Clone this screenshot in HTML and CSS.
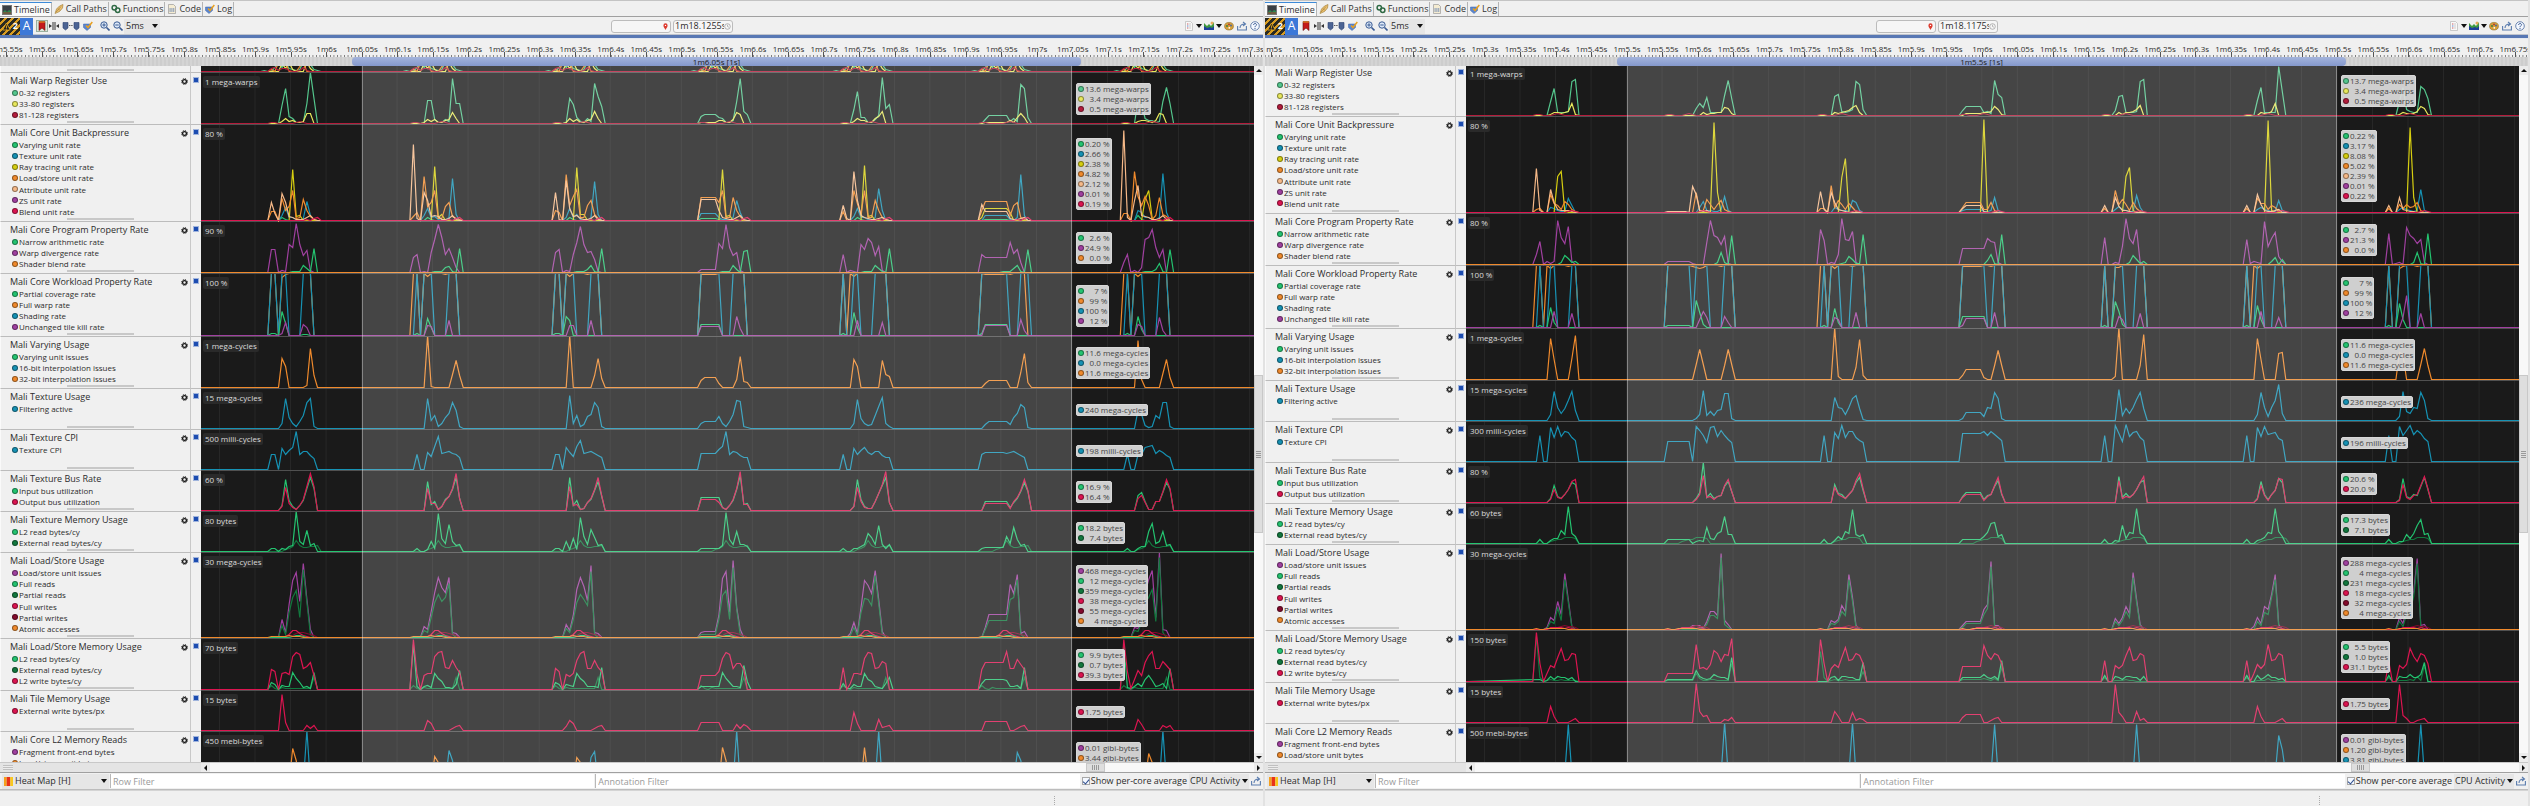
FILE: index.html
```html
<!DOCTYPE html>
<html lang="en">
<head>
  <meta charset="utf-8">
  <title>Timeline Compare</title>
  <link rel="stylesheet" href="styles.css">
</head>
<body>
  <svg class="symbols" aria-hidden="true">
    <symbol id="i-timeline" viewBox="0 0 10 10"><rect x=".5" y=".5" width="9" height="9" fill="#3a3f44" stroke="#777"/><path d="M1 7l2-2 2 2 2-2 2 1v3H1z" fill="#2d8a4e"/><path d="M1 8h8" stroke="#b03030"/></symbol>
    <symbol id="i-paths" viewBox="0 0 10 10"><path d="M1 9.500L2.500 5l3-3L9 .5 8.500 4l-3 3.500z" fill="#ecc070" stroke="#9c7830" stroke-width=".6"/><path d="M2 8l5-5.500M4 4.500l2 2" stroke="#9c7830" stroke-width=".6"/></symbol>
    <symbol id="i-functions" viewBox="0 0 10 10"><g fill="none" stroke="#2f6a45" stroke-width="1.500"><circle cx="3.300" cy="3.800" r="2.200"/><circle cx="6.700" cy="6.200" r="2.200"/></g></symbol>
    <symbol id="i-code" viewBox="0 0 10 10"><path d="M1.500.5h5l2 2v7h-7z" fill="#f5ecd2" stroke="#9a9a9a" stroke-width=".7"/><path d="M2.500 5h5M2.500 7h5" stroke="#3b62a8" stroke-dasharray="1.200 .6"/></symbol>
    <symbol id="i-check" viewBox="0 0 10 10"><path d="M.5 3h7v3.500L4 9.500.5 6.500z" fill="#5b86cf" stroke="#3b62a8" stroke-width=".5"/><path d="M3 4.500l2 2L9.300 1" fill="none" stroke="#e8a020" stroke-width="1.500"/></symbol>
    <symbol id="i-bookmark" viewBox="0 0 10 10"><path d="M2 .5h6v9L5 7 2 9.500z" fill="#c41a1a" stroke="#6b0e0e" stroke-width=".6"/><path d="M2 1h6" stroke="#e8a020"/></symbol>
    <symbol id="i-split" viewBox="0 0 10 10"><path d="M4 1v8M6 1v8" stroke="#333"/><path d="M0 3l3 2-3 2zM10 3L7 5l3 2z" fill="#333"/></symbol>
    <symbol id="i-range" viewBox="0 0 18 10"><path d="M1 1.500h5V7L3.500 9 1 7zM12 1.500h5V7l-2.500 2L12 7z" fill="#4c6494" stroke="#2c4270" stroke-width=".6"/><path d="M7 4.500h4" stroke="#555" stroke-dasharray="1.400 .8"/></symbol>
    <symbol id="i-zoomin" viewBox="0 0 10 10"><circle cx="4" cy="4" r="3.200" fill="#dce8f8" stroke="#3b5c94"/><path d="M6.500 6.500l3 3" stroke="#3b5c94" stroke-width="1.600"/><path d="M2.300 4h3.400M4 2.300v3.400" stroke="#3b5c94"/></symbol>
    <symbol id="i-zoomout" viewBox="0 0 10 10"><circle cx="4" cy="4" r="3.200" fill="#dce8f8" stroke="#3b5c94"/><path d="M6.500 6.500l3 3" stroke="#3b5c94" stroke-width="1.600"/><path d="M2.300 4h3.400" stroke="#3b5c94"/></symbol>
    <symbol id="i-doc" viewBox="0 0 10 10"><path d="M1.500.5h5l2 2v7h-7z" fill="#f8f8f8" stroke="#b8b8b8" stroke-width=".7"/><path d="M3 3h1.400M3 7h1.400" stroke="#d06060"/><path d="M3 5h1.400" stroke="#5b86cf"/><path d="M5 3h2M5 5h2M5 7h2" stroke="#bbb" stroke-width=".7"/></symbol>
    <symbol id="i-chart" viewBox="0 0 10 10"><path d="M0 2l3 3 2-2 2 2 3-4v8H0z" fill="#3f9a3f"/><path d="M0 5l3 2 3-1 2 1 2-2v4H0z" fill="#1d3f9a"/><circle cx="8" cy="2" r="1.500" fill="#e8a85a"/></symbol>
    <symbol id="i-palette" viewBox="0 0 10 10"><ellipse cx="5" cy="5.200" rx="4.400" ry="3.800" fill="#d8a038" stroke="#8f6a20" stroke-width=".6"/><circle cx="3" cy="5" r=".9" fill="#2f7a45"/><circle cx="5" cy="3.400" r=".9" fill="#b03030"/><circle cx="7" cy="4.500" r=".9" fill="#3b62a8"/><circle cx="5.300" cy="6.800" r=".9" fill="#fff"/></symbol>
    <symbol id="i-export" viewBox="0 0 10 10"><path d="M.6 5v4h8.800V5M3 7c0-3 2-4 5-4M6 1l2.500 2L6 5" fill="none" stroke="#5a7cae" stroke-width="1.100"/></symbol>
    <symbol id="i-help" viewBox="0 0 10 10"><circle cx="5" cy="5" r="4.300" fill="#f4f8ff" stroke="#4a6a9c" stroke-width=".8"/><path d="M3.600 4c0-2 2.900-2 2.900-.2C6.500 4.800 5 4.800 5 6.200M5 7v1" fill="none" stroke="#3b5c94"/></symbol>
    <symbol id="i-gear" viewBox="0 0 10 10"><circle cx="5" cy="5" r="4.200" fill="none" stroke="#111" stroke-width="1.400" stroke-dasharray="1.650 1.650"/><circle cx="5" cy="5" r="2.700" fill="none" stroke="#111" stroke-width="1.800"/></symbol>
    <symbol id="i-heat" viewBox="0 0 10 10"><path d="M0 0h3v10H0z" fill="#f5a01e"/><path d="M3 0h4v10H3z" fill="#e8321a"/><path d="M7 0h3v10H7z" fill="#f8c81e"/></symbol>
    <symbol id="i-pin" viewBox="0 0 10 10"><path d="M5 10C4 7 2 6 2 3.400a3 3 0 0 1 6 0C8 6 6 7 5 10z" fill="#dd3a2e"/><circle cx="5" cy="3.400" r="1" fill="#fff"/></symbol>
    <symbol id="i-clock" viewBox="0 0 10 10"><circle cx="5" cy="5" r="4" fill="none" stroke="#999"/><path d="M5 2.500V5l2 1" fill="none" stroke="#999"/></symbol>
    <symbol id="i-warn" viewBox="0 0 10 10"><path d="M5 1l4.300 8H.7z" fill="#222" stroke="#f0b020" stroke-width=".9"/><path d="M5 3.800v3M5 7.400v1" stroke="#f0b020"/></symbol>
  </svg>

  <main class="workspace">
    <section class="panel" data-panel="left">
      <nav class="tabs">
        <a class="tab active" href="#"><svg><use href="#i-timeline"/></svg>Timeline</a>
        <a class="tab" href="#"><svg><use href="#i-paths"/></svg>Call Paths</a>
        <a class="tab" href="#"><svg><use href="#i-functions"/></svg>Functions</a>
        <a class="tab" href="#"><svg><use href="#i-code"/></svg>Code</a>
        <a class="tab" href="#"><svg><use href="#i-check"/></svg>Log</a>
      </nav>
      <div class="toolbar">
        <div class="tools">
          <button class="warnings" aria-label="2 warnings"><svg><use href="#i-warn"/></svg>2</button>
          <button class="annotate" aria-label="Annotations">A</button>
          <button class="tool pressed" aria-label="Bookmarks"><svg><use href="#i-bookmark"/></svg></button>
          <button class="tool" aria-label="Split"><svg><use href="#i-split"/></svg></button>
          <button class="tool wide" aria-label="Range"><svg><use href="#i-range"/></svg></button>
          <button class="tool" aria-label="Filter"><svg><use href="#i-check"/></svg></button>
          <span class="spacer"></span>
          <button class="tool" aria-label="Zoom in"><svg><use href="#i-zoomin"/></svg></button>
          <button class="tool" aria-label="Zoom out"><svg><use href="#i-zoomout"/></svg></button>
          <span class="picker zoom"><select aria-label="Zoom level"><option>5ms</option></select></span>
        </div>
        <div class="markers">
          <label class="marker"><input type="text" aria-label="Marker"><svg><use href="#i-pin"/></svg></label>
          <label class="marker"><input type="text" aria-label="Duration" value="1m18.1255s"><svg><use href="#i-clock"/></svg></label>
        </div>
        <div class="tools end">
          <button class="tool menu" aria-label="Switch template"><svg><use href="#i-doc"/></svg></button>
          <button class="tool menu" aria-label="Charts"><svg><use href="#i-chart"/></svg></button>
          <button class="tool" aria-label="Colors"><svg><use href="#i-palette"/></svg></button>
          <button class="tool" aria-label="Export"><svg><use href="#i-export"/></svg></button>
          <button class="tool" aria-label="Help"><svg><use href="#i-help"/></svg></button>
        </div>
      </div>
      <div class="ruler"></div>
      <div class="strip"><div class="range">1m6.05s [1s]</div></div>
      <div class="view">
        <div class="rows"></div>
        <div class="vscroll"><span class="arrow up"></span><span class="thumb"></span><span class="arrow down"></span></div>
      </div>
      <div class="hscroll">
        <div class="under-legend"><span class="grip"></span></div>
        <div class="track"><span class="arrow left"></span><span class="thumb"></span><span class="arrow right"></span></div>
      </div>
      <div class="filters">
        <span class="picker heat"><svg><use href="#i-heat"/></svg><select aria-label="Details view"><option>Heat Map [H]</option></select></span>
        <input class="filter" type="text" placeholder="Row Filter" aria-label="Row Filter">
        <input class="filter" type="text" placeholder="Annotation Filter" aria-label="Annotation Filter">
        <label class="average"><input type="checkbox" checked>Show per-core average</label>
        <span class="picker activity"><select aria-label="Activity"><option>CPU Activity</option></select></span>
        <button class="tool" aria-label="Export rows"><svg><use href="#i-export"/></svg></button>
      </div>
      <div class="status"><span class="handle"></span></div>
    </section>

    <section class="panel" data-panel="right">
      <nav class="tabs">
        <a class="tab active" href="#"><svg><use href="#i-timeline"/></svg>Timeline</a>
        <a class="tab" href="#"><svg><use href="#i-paths"/></svg>Call Paths</a>
        <a class="tab" href="#"><svg><use href="#i-functions"/></svg>Functions</a>
        <a class="tab" href="#"><svg><use href="#i-code"/></svg>Code</a>
        <a class="tab" href="#"><svg><use href="#i-check"/></svg>Log</a>
      </nav>
      <div class="toolbar">
        <div class="tools">
          <button class="warnings" aria-label="2 warnings"><svg><use href="#i-warn"/></svg>2</button>
          <button class="annotate" aria-label="Annotations">A</button>
          <button class="tool" aria-label="Bookmarks"><svg><use href="#i-bookmark"/></svg></button>
          <button class="tool" aria-label="Split"><svg><use href="#i-split"/></svg></button>
          <button class="tool wide" aria-label="Range"><svg><use href="#i-range"/></svg></button>
          <button class="tool" aria-label="Filter"><svg><use href="#i-check"/></svg></button>
          <span class="spacer"></span>
          <button class="tool" aria-label="Zoom in"><svg><use href="#i-zoomin"/></svg></button>
          <button class="tool" aria-label="Zoom out"><svg><use href="#i-zoomout"/></svg></button>
          <span class="picker zoom"><select aria-label="Zoom level"><option>5ms</option></select></span>
        </div>
        <div class="markers">
          <label class="marker"><input type="text" aria-label="Marker"><svg><use href="#i-pin"/></svg></label>
          <label class="marker"><input type="text" aria-label="Duration" value="1m18.1175s"><svg><use href="#i-clock"/></svg></label>
        </div>
        <div class="tools end">
          <button class="tool menu" aria-label="Switch template"><svg><use href="#i-doc"/></svg></button>
          <button class="tool menu" aria-label="Charts"><svg><use href="#i-chart"/></svg></button>
          <button class="tool" aria-label="Colors"><svg><use href="#i-palette"/></svg></button>
          <button class="tool" aria-label="Export"><svg><use href="#i-export"/></svg></button>
          <button class="tool" aria-label="Help"><svg><use href="#i-help"/></svg></button>
        </div>
      </div>
      <div class="ruler"></div>
      <div class="strip"><div class="range">1m5.5s [1s]</div></div>
      <div class="view">
        <div class="rows scrolled"></div>
        <div class="vscroll"><span class="arrow up"></span><span class="thumb"></span><span class="arrow down"></span></div>
      </div>
      <div class="hscroll">
        <div class="under-legend"><span class="grip"></span></div>
        <div class="track"><span class="arrow left"></span><span class="thumb"></span><span class="arrow right"></span></div>
      </div>
      <div class="filters">
        <span class="picker heat"><svg><use href="#i-heat"/></svg><select aria-label="Details view"><option>Heat Map [H]</option></select></span>
        <input class="filter" type="text" placeholder="Row Filter" aria-label="Row Filter">
        <input class="filter" type="text" placeholder="Annotation Filter" aria-label="Annotation Filter">
        <label class="average"><input type="checkbox" checked>Show per-core average</label>
        <span class="picker activity"><select aria-label="Activity"><option>CPU Activity</option></select></span>
        <button class="tool" aria-label="Export rows"><svg><use href="#i-export"/></svg></button>
      </div>
      <div class="status"><span class="handle"></span></div>
    </section>
  </main>

  <script src="timeline.js"></script>
</body>
</html>
```

FILE: styles.css
```css
* {
  box-sizing: border-box;
}

body {
  margin: 0;
  background-color: #f0f0f0;
  color: #2c2c2c;
  font-family: "Open Sans", "Noto Sans", sans-serif;
  font-size: 9px;
  line-height: 12px;
}

button,
input,
select {
  margin: 0;
  padding: 0;
  border: none;
  background: none;
  color: inherit;
  font: inherit;
}

.symbols {
  display: none;
}

.workspace {
  display: grid;
  grid-template-columns: 1fr 1fr;
  gap: 2px;
  height: 100vh;
  padding-right: 2px;
  background-color: #e2e2e2;
}

.panel {
  display: flex;
  flex-direction: column;
  min-width: 0;
  min-height: 0;
  overflow: hidden;
  border-top: 1px solid #c4c4c4;
  background-color: #f0f0f0;
}

/* tabs */
.tabs {
  display: flex;
  height: 16px;
  border-bottom: 1px solid #a0a0a0;
}

.tab {
  display: flex;
  align-items: center;
  gap: 2px;
  margin-top: 1px;
  padding: 0 1px 0 2px;
  border-right: 1px solid #b4b4b4;
  color: #333;
  text-decoration: none;
}

.tab svg {
  width: 10px;
  height: 10px;
}

.tab.active {
  border-top: 1px solid #3c8ad8;
  background-color: #fafafa;
}

/* toolbar */
.toolbar {
  display: flex;
  align-items: center;
  height: 22px;
  padding-bottom: 4px;
  background: linear-gradient(#f0f0f0 0 17px, #c0c4cc 17px 18px, #5878b4 18px 21px, #e4e8f0 21px);
}

.tools {
  display: flex;
  align-items: center;
  gap: 3px;
}

.tools.end {
  padding-right: 3px;
}

.tool {
  display: flex;
  align-items: center;
  gap: 2px;
  width: 10px;
  height: 12px;
}

.tool svg {
  flex: none;
  width: 10px;
  height: 10px;
}

.tool.wide,
.tool.wide svg {
  width: 18px;
}

.tool.menu {
  width: 17px;
}

.tool.menu::after,
.picker::after {
  content: "";
  border: 3px solid transparent;
  border-top: 4px solid #111;
  border-bottom: none;
}

.tool.pressed {
  justify-content: center;
  width: 12px;
  margin-right: -2px;
  border: 1px solid #9ab0a0;
  background-color: #dce8dc;
}

.spacer {
  width: 1px;
}

.warnings {
  display: flex;
  align-items: center;
  gap: 2px;
  width: 20px;
  height: 17px;
  padding: 0 2px;
  background: repeating-linear-gradient(135deg, #2a2a22 0 3px, #d89c20 3px 5px);
  color: #fff;
  font-weight: bold;
}

.warnings svg {
  width: 9px;
  height: 9px;
}

.annotate {
  width: 13px;
  height: 17px;
  margin: 0 0 0 -3px;
  background-color: #3c78d8;
  color: #fff;
  font-size: 12px;
}

.picker {
  display: flex;
  align-items: center;
  height: 15px;
  background-color: #e6e6e6;
}

.picker select {
  flex: 1;
  min-width: 0;
  appearance: none;
  outline: none;
}

.picker.zoom {
  width: 36px;
  margin-left: -2px;
  padding: 0 2px;
}

.markers {
  display: flex;
  flex: 1;
  justify-content: center;
  gap: 2px;
}

.marker {
  display: flex;
  align-items: center;
  width: 60px;
  height: 13px;
  padding: 0 1px;
  border: 1px solid #bcbcbc;
  border-radius: 3px;
  background-color: #f6f6f6;
}

.marker input {
  flex: 1;
  min-width: 0;
}

.marker svg {
  flex: none;
  width: 7px;
  height: 7px;
}

/* time ruler */
.ruler {
  display: flex;
  height: 18px;
  margin: 0 -5px 0 -11px;
}

.mark {
  flex: 1;
  min-width: 0;
  padding-top: 4px;
  background:
    linear-gradient(#555, #555) center bottom / 1px 5px no-repeat,
    linear-gradient(90deg, #777 1px, transparent 1px) left bottom / 10% 2px repeat-x;
  font-size: 8px;
  line-height: 12px;
  text-align: center;
  white-space: nowrap;
}

.strip {
  height: 9px;
  padding: 0 182px 0 352px;
  background: repeating-linear-gradient(90deg, #cdcdcd 0 2px, #d4d4d4 2px 4px);
}

.range {
  height: 9px;
  border-radius: 4px;
  background: linear-gradient(#a4b4dc, #8498cc);
  color: #222;
  font-size: 8px;
  line-height: 10px;
  text-align: center;
}

/* chart rows */
.view {
  display: flex;
  flex: 1;
  min-height: 0;
}

.rows {
  flex: 1;
  min-width: 0;
  overflow: hidden;
}

.row {
  display: grid;
  grid-template-columns: 190px 11px 1fr;
}

.scrolled .row:first-child {
  margin-top: -1px;
}

.legend {
  display: flex;
  flex-direction: column;
  min-height: 0;
  padding: 2px 0 0 9px;
  border-bottom: 1px solid #bcbcbc;
  border-left: 1px solid #fafafa;
  background:
    linear-gradient(#c8c8c8, #c8c8c8) 66px calc(100% - 1px) / 67px 2px no-repeat,
    #f0f0f0;
}

.legend header {
  display: flex;
  justify-content: space-between;
  align-items: center;
  height: 12px;
}

.legend h2 {
  margin: 0;
  font-size: 9px;
  font-weight: normal;
  line-height: 12px;
}

.gear {
  width: 8px;
  height: 8px;
  margin-right: 1px;
}

.gear svg {
  display: block;
  width: 7px;
  height: 7px;
}

.legend ul {
  display: flex;
  flex: 1;
  flex-direction: column;
  justify-content: space-between;
  margin: 0;
  padding: 0 0 4px 2px;
  list-style: none;
}

.legend li {
  display: flex;
  align-items: center;
  gap: 1px;
  height: 11px;
  font-size: 8px;
  line-height: 11px;
}

.dot {
  flex: none;
  width: 6px;
  height: 6px;
  border: 1px solid rgba(0, 0, 0, 0.4);
  border-radius: 50%;
}

.side {
  padding: 4px 0 0 2px;
  border-bottom: 1px solid #bcbcbc;
  border-left: 1px solid #c8c8c8;
  background-color: #f0f0f0;
}

.swatch {
  display: block;
  width: 6px;
  height: 6px;
  border: 1px solid #a0b4dc;
  background-color: #1c4cb0;
}

.chart {
  position: relative;
  min-width: 0;
  background-color: #1a1a1a;
}

.chart svg {
  display: block;
  width: 100%;
  height: 100%;
}

.chart polyline {
  fill: none;
  stroke-width: 1.2;
  vector-effect: non-scaling-stroke;
}

.grid {
  stroke: #fff;
  stroke-opacity: 0.06;
}

.rule {
  stroke: #505050;
}

.selection {
  fill: #fff;
  fill-opacity: 0.19;
}

.edge {
  stroke: #fff;
  stroke-opacity: 0.35;
}

.scale,
.values {
  position: absolute;
  border-radius: 2px;
  font-size: 8px;
  white-space: nowrap;
}

.scale {
  top: 3px;
  left: 2px;
  padding: 0 2px;
  background-color: #2a2a2a;
  color: #dcdcdc;
}

.values {
  top: 50%;
  margin: 0;
  padding: 0 1px;
  border: 1px solid #d8d8d8;
  background-color: rgba(222, 222, 222, 0.92);
  color: #444;
  list-style: none;
  transform: translateY(-50%);
}

.values li {
  display: flex;
  align-items: center;
  gap: 1px;
  height: 10px;
  line-height: 10px;
}

.values span {
  margin-left: auto;
}

/* scrollbars */
.vscroll {
  display: grid;
  grid-template-rows: 9px 300fr 157fr 220fr 9px;
  width: 9px;
  background-color: #f8f8f8;
}

.arrow {
  display: grid;
  place-items: center;
  background-color: #ececec;
}

.arrow::after {
  content: "";
  border: 3px solid transparent;
}

.up::after {
  border-bottom-color: #111;
  border-top: none;
}

.down::after {
  border-top-color: #111;
  border-bottom: none;
}

.left::after {
  border-right-color: #111;
  border-left: none;
}

.right::after {
  border-left-color: #111;
  border-right: none;
}

.thumb {
  border: 1px solid #c8c8c8;
  background-color: #dedede;
}

.vscroll .thumb {
  grid-row: 3;
  background: repeating-linear-gradient(#999 0 1px, #dedede 1px 2px) center / 5px 7px no-repeat, #dedede;
}

.vscroll .down {
  grid-row: 5;
}

.hscroll {
  display: grid;
  grid-template-columns: 201px 1fr;
  height: 10px;
  border-top: 1px solid #c8c8c8;
}

.under-legend {
  padding: 2px 3px;
  background-color: #e4e4e4;
}

.grip {
  display: block;
  width: 10px;
  height: 5px;
  background: repeating-linear-gradient(#c0c0c0 0 1px, #ececec 1px 2px);
}

.track {
  display: grid;
  grid-template-columns: 9px 876fr 19px 149fr 9px;
  background-color: #f8f8f8;
}

.track .thumb {
  grid-column: 3;
  background: repeating-linear-gradient(90deg, #999 0 1px, #dedede 1px 2px) center / 7px 5px no-repeat, #dedede;
}

.track .right {
  grid-column: 5;
}

/* filter bar */
.filters {
  display: flex;
  align-items: center;
  gap: 2px;
  height: 18px;
  padding: 0 2px;
  border-top: 1px solid #a0a0a0;
  border-bottom: 1px solid #bcbcbc;
}

.picker.heat {
  gap: 2px;
  width: 107px;
  padding: 0 2px;
}

.picker.heat svg {
  width: 9px;
  height: 9px;
}

.picker.activity {
  width: 60px;
  padding: 0 1px;
}

.filter {
  flex: 1;
  min-width: 0;
  height: 14px;
  margin-left: -1px;
  padding: 0 2px;
  border-left: 1px solid #b8b8b8;
  background-color: #fff;
}

.filter::placeholder {
  color: #999;
}

.average {
  display: flex;
  align-items: center;
  gap: 1px;
}

.average input {
  display: grid;
  place-items: center;
  width: 8px;
  height: 8px;
  border: 1px solid #a8a8a8;
  background-color: #f4f8ff;
  appearance: none;
}

.average input:checked::after {
  content: "";
  width: 3px;
  height: 5px;
  border: solid #2c4c8c;
  border-width: 0 1px 1px 0;
  transform: rotate(40deg);
}

.status {
  height: 16px;
  padding: 5px 208px 0 0;
  border-top: 1px solid #d4d4d4;
}

.handle {
  display: block;
  width: 1px;
  height: 9px;
  margin-left: auto;
  background: repeating-linear-gradient(#aaa 0 1px, transparent 1px 2px);
}
```

FILE: timeline.js
```javascript
var mint = "#54c78d", lemon = "#e8e85c", wine = "#b41c3c";
var green = "#24c470", blue = "#1692b4", yellow = "#d6ce10", orange = "#f08a2c";
var peach = "#f6b988", purple = "#a040a0", red = "#dc1450", forest = "#12783e", maroon = "#840a2c";

var CHART_WIDTH = 1053;
var STEP = 3.552;      // one 5ms sample
var ORIGIN = 66.8;     // first sample of the first frame

// counters shown in both captures
var rows = [
  { title: "Mali Warp Register Use", height: 52, items: [["0-32 registers", mint], ["33-80 registers", lemon], ["81-128 registers", wine]] },
  { title: "Mali Core Unit Backpressure", height: 97, items: [["Varying unit rate", green], ["Texture unit rate", blue], ["Ray tracing unit rate", yellow], ["Load/store unit rate", orange], ["Attribute unit rate", peach], ["ZS unit rate", purple], ["Blend unit rate", red]] },
  { title: "Mali Core Program Property Rate", height: 52, items: [["Narrow arithmetic rate", green], ["Warp divergence rate", purple], ["Shader blend rate", orange]] },
  { title: "Mali Core Workload Property Rate", height: 63, items: [["Partial coverage rate", green], ["Full warp rate", orange], ["Shading rate", blue], ["Unchanged tile kill rate", purple]] },
  { title: "Mali Varying Usage", height: 52, items: [["Varying unit issues", green], ["16-bit interpolation issues", blue], ["32-bit interpolation issues", orange]] },
  { title: "Mali Texture Usage", height: 41, items: [["Filtering active", blue]] },
  { title: "Mali Texture CPI", height: 41, items: [["Texture CPI", blue]] },
  { title: "Mali Texture Bus Rate", height: 41, items: [["Input bus utilization", green], ["Output bus utilization", red]] },
  { title: "Mali Texture Memory Usage", height: 41, items: [["L2 read bytes/cy", green], ["External read bytes/cy", forest]] },
  { title: "Mali Load/Store Usage", height: 86, items: [["Load/store unit issues", purple], ["Full reads", green], ["Partial reads", forest], ["Full writes", red], ["Partial writes", maroon], ["Atomic accesses", orange]] },
  { title: "Mali Load/Store Memory Usage", height: 52, items: [["L2 read bytes/cy", green], ["External read bytes/cy", forest], ["L2 write bytes/cy", red]] },
  { title: "Mali Tile Memory Usage", height: 41, items: [["External write bytes/px", red]] },
  { title: "Mali Core L2 Memory Reads", height: 52, items: [["Fragment front-end bytes", purple], ["Load/store unit bytes", orange], ["Texture unit bytes", blue]] }
];

// the same small bump in every frame
function each(burst) {
  return [burst, burst, burst, burst, burst, burst, burst];
}

// Every burst is [first sample, height, height, ...], one burst per frame.
var panels = {
  left: {
    firstMark: 5.55,
    frames: [0, 40, 80, 121, 161, 200, 240],
    partial: [
      [mint, each([-2, 0, 1, 0, 0, 4, 9, 4, 9, 3, 2, 1, 2, 10, 9, 7, 2, 1, 0])],
      [lemon, each([3, 0, 8, 3, 9, 2, 0, 0, 0, 9, 3, 0])],
      [orange, each([0, 0, 2, 0, 9, 6, 9, 0, 0, 0, 5, 9, 0])],
      [wine, each([0, 0, 3, 4, 1, 3, 3, 1, 0, 0, 1, 4, 1, 0])]
    ],
    charts: [
      { scale: "1 mega-warps", values: ["13.6 mega-warps", "3.4 mega-warps", "0.5 mega-warps"], lines: [
        [mint, [[3,0,18,35,7,5,1,1,1,20,51,25,0], [4,0,23,23,4,1,1,4,2,45,20,20,0], [3,0,1,25,19,6,2,1,5,2,40,27,17,0], [0,0,7,9,9,9,9,6,5,1,1,3,22,45,12,9,0], [3,0,14,32,6,6,1,1,4,8,46,15,19,0], [1,0,4,8,8,8,8,8,8,2,5,2,39,35,6,0], [4,0,24,20,5,3,3,1,2,22,36,20,0]]],
        [lemon, [[3,0,2,5,2,3,1,1,2,10,10,0], [3,0,1,4,2,4,1,1,3,4,11,5,0], [3,0,1,5,2,4,1,1,3,4,12,5,0], [0,0,1,1,1,1,1,3,3,1,1,4,11,9,0], [3,0,2,5,3,3,1,1,5,7,12,0], [1,0,1,1,1,1,1,1,1,3,1,6,10,6,0], [4,0,2,3,3,2,1,3,10,9,0]]],
        [wine, each([0,0,1,1,0,0,0,0,0,1,2,1,0])]
      ] },
      { scale: "80 %", values: ["0.20 %", "2.66 %", "2.38 %", "4.82 %", "2.12 %", "0.01 %", "0.19 %"], lines: [
        [green, [[3,0,3,1,0], [4,0,3,1,0], [4,0,3,1,0], [0,0,2,2,2,2,2,1,0], [4,0,3,1,0], [1,0,1,1,1,1,1,1,1,0], [4,0,5,1,0]]],
        [blue, [[3,0,5,13,3,3,1,0,2,19,5,0], [3,0,5,12,3,4,1,0,0,3,42,6,0], [3,0,3,12,3,6,1,0,0,3,39,6,0], [0,0,7,7,7,7,7,3,1,1,0,3,20,8,0], [3,0,4,12,3,3,1,0,3,32,10,0], [1,0,5,5,5,5,5,5,5,1,0,3,46,5,0], [4,0,10,8,3,3,1,0,3,47,8,0]]],
        [yellow, [[6,0,51,4,5,0], [6,0,54,3,6,0], [6,0,53,6,6,0], [6,0,51,4,5,0], [6,0,55,4,5,0], [0,0,3,12,12,12,12,12,12,12,8,0], [6,0,21,30,2,0]]],
        [orange, [[0,0,9,9,0,22,10,14,30,2,3,21,10,4,1,0], [0,0,4,8,0,44,14,18,30,2,2,14,18,4,2,1,0], [0,0,10,8,0,46,15,24,31,3,3,15,20,6,2,0], [0,0,23,23,23,23,23,18,30,3,3,23,10,4,0], [0,0,9,0,0,30,17,6,30,3,3,20,10,3,1,0], [0,0,10,19,19,19,19,19,19,19,5,15,18,3,1,0], [0,0,7,7,0,49,24,15,24,15,1,5,23,6,4,0]]],
        [peach, [[0,0,18,7,0,27,18,4,3,1,1,1,3,5,1,0], [0,0,76,2,0,28,20,4,5,4,1,1,2,5,1,0], [0,0,28,1,0,40,12,4,5,2,1,1,2,5,1,0], [0,0,21,21,21,21,21,10,3,2,1,1,3,5,1,0], [0,0,15,2,0,49,20,5,3,2,1,1,2,3,1,0], [0,0,16,9,9,9,9,9,9,9,2,1,1,2,3,0], [0,0,90,3,0,20,35,5,4,3,1,1,2,5,1,0]]],
        [red, each([10,0,1,0,2,3,0])]
      ] },
      { scale: "90 %", values: ["2.6 %", "24.9 %", "0.0 %"], lines: [
        [purple, [[0,0,23,23,0,2,1,28,25,49,28,17,22,2,0], [0,0,15,18,0,1,0,20,33,48,35,18,24,15,5,0], [0,0,20,23,0,2,1,18,30,46,28,20,21,13,1,0], [0,0,3,3,3,3,3,29,24,48,25,17,20,2,0], [0,0,18,0,2,1,0,28,23,34,30,17,26,2,0], [0,0,18,15,15,15,15,15,15,15,30,19,23,10,0], [0,0,10,18,0,2,0,5,33,35,43,25,15,23,0]]],
        [green, [[5,0,0,1,1,1,7,4,1,24,0], [6,0,1,1,1,5,6,1,0,24,0], [6,0,1,1,1,3,7,1,0,24,0], [6,0,1,1,1,7,3,0,21,22,0], [6,0,1,1,1,7,4,1,0,24,0], [6,0,1,1,1,4,7,1,0,23,0], [6,0,1,1,1,3,9,1,0,23,0]]],
        [orange, each([0,0])]
      ] },
      { scale: "100 %", values: ["7 %", "99 %", "100 %", "12 %"], lines: [
        [orange, [[0,0,62,62,0,58,61,62,62,62,62,62,62,62,0], [0,0,62,62,0,62,59,62,62,62,62,61,62,62,62,0], [0,0,62,62,0,62,59,62,62,62,62,61,62,62,62,0], [0,0,61,61,61,61,61,62,62,62,62,62,62,62,62,0], [0,0,62,0,62,59,62,62,62,62,62,62,62,62,62,0], [0,0,62,61,61,61,61,61,61,62,61,62,62,62,62,0], [0,0,62,62,0,62,59,62,62,62,62,62,62,62,62,0]]],
        [blue, [[0,0,62,62,0,62,62,0,0,0,0,62,62,62,0], [1,0,62,0,62,62,62,0,0,0,0,62,62,62,0], [0,0,62,62,0,62,62,62,0,0,0,0,62,62,62,0], [0,0,62,62,62,62,62,62,0,0,0,62,62,62,62,0], [0,0,62,0,0,62,62,0,0,0,0,62,62,62,62,0], [0,0,62,62,62,62,62,62,62,62,0,0,0,62,62,62,0], [1,0,62,0,62,62,62,0,0,0,0,62,62,62,0]]],
        [green, [[0,0,2,2,0,24,12,0,0,0,0,1,1,0], [1,0,2,0,0,17,8,0], [0,0,2,2,0,19,15,0], [0,0,11,11,11,11,11,11,0], [0,0,2,0,0,23,8,0], [0,0,2,11,11,11,11,11,11,11,0], [1,0,2,0,0,19,6,0]]],
        [purple, [[3,0,2,13,0,0,0,0,11,8,0], [4,0,10,9,0,0,0,0,15,0], [4,0,10,10,0,0,0,0,15,0], [0,0,9,9,9,9,9,9,0,0,0,0,19,7,0], [4,0,15,0,0,0,0,0,0,13,0], [1,0,10,10,10,10,10,10,10,0,0,0,16,5,0], [4,0,11,9,0,0,0,0,18,5,0]]]
      ] },
      { scale: "1 mega-cycles", values: ["11.6 mega-cycles", "0.0 mega-cycles", "11.6 mega-cycles"], lines: [
        [orange, [[3,0,29,21,0,0,0,0,0,2,39,12,0], [4,0,52,1,0,0,0,0,0,13,27,12,0], [4,0,52,0,0,0,0,0,0,12,29,9,0], [0,0,7,10,10,10,10,4,0,0,0,0,8,31,6,5,0], [3,0,28,21,0,0,0,0,0,0,27,13,11,0], [1,0,4,7,7,7,7,7,7,0,0,0,15,34,5,0], [4,0,47,8,0,0,0,0,0,14,28,10,0]]]
      ] },
      { scale: "15 mega-cycles", values: ["240 mega-cycles"], lines: [
        [blue, [[3,0,5,30,11,5,2,7,13,26,30,2,0], [4,0,30,8,13,2,5,11,15,26,18,2,0], [4,0,33,5,13,2,4,12,14,26,21,2,0], [0,0,5,7,7,7,7,12,5,2,7,14,28,27,2,1,0], [3,0,5,29,10,5,3,4,13,22,31,5,2,0], [1,0,4,7,7,7,7,7,7,4,11,15,24,21,1,0], [4,0,18,14,3,1,2,13,10,26,26,2,0]]]
      ] },
      { scale: "500 milli-cycles", values: ["198 milli-cycles"], lines: [
        [blue, [[0,0,15,15,0,21,15,19,22,38,15,18,18,14,11,0], [1,0,15,0,0,17,13,23,33,16,17,18,16,15,12,0], [0,0,15,15,0,22,17,13,23,29,16,17,18,16,14,12,0], [0,0,16,16,16,16,16,20,23,38,15,18,17,14,12,12,0], [0,0,15,0,0,21,15,19,22,17,15,18,18,14,12,12,0], [0,0,15,17,17,17,17,17,17,16,17,18,16,14,12,0], [1,0,15,0,0,15,15,22,23,24,16,19,17,14,12,0]]]
      ] },
      { scale: "60 %", values: ["16.9 %", "16.4 %"], lines: [
        [green, [[3,0,5,31,10,4,1,5,10,22,33,22,0], [4,0,29,6,9,1,4,11,14,21,33,12,0], [4,0,33,5,10,1,2,8,11,20,29,14,0], [0,0,13,13,13,13,13,13,3,1,5,10,21,35,6,7,0], [3,0,4,31,11,4,2,2,9,17,25,33,8,0], [1,0,9,9,9,9,9,9,9,3,8,12,19,28,19,0], [4,0,15,18,9,1,1,9,9,18,28,21,0]]],
        [red, [[3,0,4,23,7,3,1,5,11,24,37,24,0], [4,0,22,7,7,1,4,10,14,22,37,12,0], [4,0,24,5,6,1,2,8,12,21,33,15,0], [0,0,11,11,11,11,11,8,3,1,5,11,22,39,6,6,0], [3,0,4,23,9,3,2,2,9,17,26,39,8,0], [1,0,7,7,7,7,7,7,7,2,9,13,20,31,20,0], [4,0,12,15,8,1,1,9,9,19,31,22,0]]]
      ] },
      { scale: "80 bytes", values: ["18.2 bytes", "7.4 bytes"], lines: [
        [forest, each([4,0,2,3,5,11,6,4,4,5,5,6,0])],
        [green, [[0,0,3,3,0,3,2,5,6,40,10,7,21,6,8,0], [1,0,3,0,0,2,10,3,38,13,8,27,10,6,7,0], [0,0,3,3,0,10,2,13,2,34,15,7,22,14,6,7,0], [0,0,3,3,3,3,3,3,6,39,12,7,20,7,7,5,0], [0,0,3,0,0,3,3,5,7,18,14,7,26,7,3,7,0], [0,0,3,4,4,4,4,4,4,15,8,24,12,6,7,0], [1,0,3,0,0,3,5,5,20,28,8,10,20,6,7,0]]]
      ] },
      { scale: "30 mega-cycles", values: ["468 mega-cycles", "12 mega-cycles", "359 mega-cycles", "38 mega-cycles", "55 mega-cycles", "4 mega-cycles"], lines: [
        [purple, [[3,0,18,5,33,57,65,36,74,38,8,0], [3,0,11,8,26,45,60,50,45,60,5,4,0], [3,0,13,7,22,48,60,51,37,72,5,4,0], [0,0,5,6,6,6,6,22,59,66,25,77,30,8,0], [2,0,4,15,4,30,57,52,44,67,38,6,0], [1,0,10,23,23,23,23,23,23,53,44,63,4,6,0], [3,0,10,9,20,45,58,67,20,85,8,7,0]]],
        [forest, [[3,0,12,3,25,40,47,20,68,35,3,0], [3,0,7,5,20,35,43,36,40,54,3,0], [3,0,9,5,18,35,43,38,32,66,3,0], [0,0,3,3,3,3,3,18,42,47,18,70,28,3,0], [2,0,2,10,2,25,39,38,32,62,34,3,0], [1,0,8,17,17,17,17,17,17,38,40,58,3,0], [3,0,7,6,15,35,40,48,16,80,5,0]]],
        [maroon, each([5,0,1,2,4,5,5,4,3,2,0])],
        [red, each([3,0,1,1,3,7,7,4,2,1,0])],
        [green, each([6,0,1,2,2,1,0])],
        [orange, each([0,0,1,1,1,1,1,2,1,1,1,0])]
      ] },
      { scale: "70 bytes", values: ["9.9 bytes", "0.7 bytes", "39.3 bytes"], lines: [
        [forest, each([0,0,4,1,0,2,1,1,1,1,1,1,1,1,12,0])],
        [green, [[0,0,7,5,0,4,3,3,17,11,7,2,3,1,17,0], [0,0,45,3,0,3,4,2,16,11,8,2,2,1,5,19,0], [0,0,7,5,0,5,4,3,16,11,8,3,3,3,2,22,0], [0,0,3,3,3,3,3,3,17,11,7,3,3,2,24,8,0], [0,0,6,1,1,5,3,3,16,10,8,3,2,1,6,12,0], [0,0,6,10,10,10,10,10,10,9,3,3,4,1,22,0], [0,0,45,2,1,3,6,3,10,14,9,3,4,6,1,21,0]]],
        [red, [[0,0,20,18,0,16,17,15,33,37,35,21,23,27,14,0], [0,0,50,15,0,14,16,16,33,37,38,22,21,29,22,17,0], [0,0,21,18,0,15,13,16,29,36,38,21,21,29,22,18,0], [0,0,14,14,14,14,14,18,31,37,35,21,26,26,20,0], [0,0,22,0,6,16,16,15,31,37,36,21,22,28,26,0], [0,0,20,27,27,27,27,27,27,38,21,21,30,25,20,0], [0,0,50,18,1,10,19,14,27,34,38,21,21,28,24,20,0]]]
      ] },
      { scale: "15 bytes", values: ["1.75 bytes"], lines: [
        [red, [[3,0,36,8,0,0,0,0,0,5,2,5,0], [4,0,10,7,0,0,0,0,0,2,4,5,0], [3,0,4,10,7,0,0,0,0,0,2,4,5,0], [0,0,8,8,8,8,8,8,0,0,0,0,6,2,6,4,0], [3,0,18,7,0,0,0,0,0,11,3,4,5,0], [1,0,9,9,9,9,9,9,9,0,0,2,4,5,0], [4,0,11,6,0,0,0,0,0,5,3,5,0]]]
      ] },
      { scale: "450 mebi-bytes", values: ["0.01 gibi-bytes", "3.44 gibi-bytes", "9.08 gibi-bytes"], lines: [
        [orange, [[6,0,34,22,0], [6,0,26,20,0], [6,0,25,20,0], [6,0,35,22,0], [6,0,35,5,0], [6,0], [7,0,29,20,0]]],
        [blue, [[10,0,52,0], [10,0,32,22,0], [10,0,25,31,0], [10,0,52,0], [10,0,52,0], [10,0,30,22,0], [11,0,52,0]]]
      ] }
    ]
  },
  right: {
    firstMark: 5,
    frames: [0, 37, 80, 120, 160, 200, 240],
    charts: [
      { scale: "1 mega-warps", values: ["13.7 mega-warps", "3.4 mega-warps", "0.5 mega-warps"], lines: [
        [mint, [[4,0,14,27,3,3,3,4,34,36,0], [8,0,7,12,8,18,3,3,3,3,20,35,17,0], [4,0,19,21,4,3,4,6,34,31,6,0], [0,0,5,9,9,9,9,9,3,4,2,35,21,18,0], [3,0,5,19,20,3,3,3,4,34,36,0], [3,0,15,28,3,3,3,3,49,24,0], [3,0,14,28,6,4,3,3,29,26,17,0]]],
        [lemon, [[4,0,1,3,3,2,3,4,12,1,0], [10,0,3,1,2,2,3,3,8,7,2,0], [4,0,3,2,3,4,5,8,10,3,0], [1,0,2,2,2,2,2,3,3,4,9,6,1,0], [4,0,3,1,3,3,4,6,10,0], [4,0,3,2,2,4,12,0], [3,0,1,3,2,2,2,4,9,7,1,0]]],
        [wine, each([0,0,1,1,0,0,0,1,2,1,0])]
      ] },
      { scale: "80 %", values: ["0.22 %", "3.17 %", "8.08 %", "5.02 %", "2.39 %", "0.01 %", "0.22 %"], lines: [
        [blue, [[4,0,5,4,2,1,1,14,7,0], [9,0,5,11,2,2,1,1,3,16,2,0], [4,0,5,3,2,2,1,12,10,2,0], [0,0,2,3,3,3,3,3,1,1,2,15,2,0], [3,0,3,6,3,2,1,1,17,5,0], [3,0,3,5,3,2,1,1,12,2,0], [3,0,3,5,3,2,1,2,23,2,0]]],
        [yellow, [[6,0,36,41,1,0], [13,0,90,20,0], [6,0,35,54,0], [6,0,93,0], [6,0,36,45,2,0], [6,0,92,2,0], [6,0,85,15,0]]],
        [orange, [[0,0,3,4,0,0,18,9,7,3,11,8,3,1,0], [8,0,20,2,2,13,8,3,8,12,3,1,0], [0,0,4,4,0,27,5,12,8,3,9,5,1,0], [0,0,5,10,10,10,10,10,3,3,10,2,0], [0,0,4,0,0,22,8,13,8,2,10,4,1,0], [0,0,4,0,0,14,9,9,3,7,5,1,0], [0,0,4,0,0,8,4,8,5,6,10,2,0]]],
        [peach, [[0,0,44,2,0,0,23,10,3,2,2,2,1,0], [0,0,1,1,1,1,1,1,0,26,18,2,1,2,0], [0,0,21,3,0,20,10,3,2,1,0], [0,0,4,7,7,7,7,7,1,0], [0,0,7,0,0,15,6,2,2,1,0], [0,0,7,0,0,18,8,2,1,1,2,3,0], [0,0,7,0,0,15,3,2,1,1,0]]],
        [red, each([9,0,1,2,1,0])]
      ] },
      { scale: "80 %", values: ["2.7 %", "21.3 %", "0.0 %"], lines: [
        [purple, [[0,0,10,23,0,3,1,3,44,27,21,38,3,0], [0,0,3,3,3,3,3,3,3,1,0,0,0,22,44,29,27,20,28,1,0], [0,0,35,24,0,2,1,10,46,25,24,33,2,0], [0,0,16,16,16,16,16,16,16,26,23,22,2,0], [0,0,27,0,0,2,1,18,46,26,21,35,2,0], [0,0,25,1,3,2,1,43,18,26,32,8,3,0], [0,0,31,0,1,2,0,37,29,26,21,25,2,0]]],
        [green, [[7,0,2,9,6,2,3,0], [14,0,2,12,2,0,29,0], [6,0,1,2,8,5,1,1,30,0], [7,0,4,10,1,0,30,0], [7,0,2,9,5,1,3,0], [7,0,3,7,0,5,0], [7,0,2,12,1,0,31,0]]],
        [orange, each([0,0])]
      ] },
      { scale: "100 %", values: ["7 %", "99 %", "100 %", "12 %"], lines: [
        [orange, [[0,0,62,62,0,62,59,62,62,62,62,61,62,62,0], [0,0,62,62,62,62,62,62,62,61,60,59,60,62,62,62,62,61,62,62,62,0], [0,0,62,62,0,62,59,62,62,62,62,61,62,62,62,0], [0,0,61,61,61,61,61,61,62,62,61,62,62,62,0], [0,0,62,0,0,60,60,62,62,62,62,62,62,62,0], [0,0,62,0,62,59,62,62,62,62,62,62,62,0], [0,0,62,0,0,59,61,62,62,62,61,62,62,62,0]]],
        [blue, [[1,0,62,0,0,62,62,0,0,0,0,62,62,0], [0,0,62,62,62,62,62,62,62,0,62,62,62,62,0,0,0,0,62,62,62,0], [1,0,62,0,62,62,62,0,0,0,62,62,62,62,0], [0,0,62,62,62,62,62,62,62,0,0,62,62,62,0], [0,0,62,0,0,62,62,62,0,0,0,62,62,62,0], [0,0,62,0,0,62,62,0,0,0,62,62,62,0], [0,0,62,0,0,62,62,62,0,0,0,62,62,62,0]]],
        [green, [[1,0,2,0,0,20,5,0], [0,0,2,2,2,2,2,2,2,0,27,15,3,0], [1,0,2,0,0,19,5,0], [0,0,11,11,11,11,11,11,11,0], [0,0,2,0,0,26,16,3,0], [0,0,2,0,0,22,8,0], [0,0,2,0,0,24,8,0]]],
        [purple, [[5,0,16,0,0,0,0,14,0], [9,0,8,16,10,0,0,0,0,11,5,0], [4,0,10,8,0,0,0,0,15,0], [0,0,2,9,9,9,9,9,9,0,0,15,0], [4,0,11,8,0,0,0,0,14,0], [4,0,16,0,0,0,0,10,0], [4,0,10,32,0,0,0,14,0]]]
      ] },
      { scale: "1 mega-cycles", values: ["11.6 mega-cycles", "0.0 mega-cycles", "11.6 mega-cycles"], lines: [
        [orange, [[4,0,41,20,0,0,0,0,21,44,0], [8,0,15,30,15,0,0,0,0,0,14,30,15,0], [4,0,52,3,0,0,0,0,12,40,4,0], [0,0,4,10,10,10,10,10,2,0,0,14,29,14,0], [3,0,3,52,0,0,0,0,0,14,45,0], [3,0,41,20,0,0,0,0,26,27,0], [3,0,27,25,0,0,0,0,15,31,14,0]]]
      ] },
      { scale: "15 mega-cycles", values: ["236 mega-cycles"], lines: [
        [blue, [[4,0,6,29,13,7,12,20,29,10,0], [8,0,2,6,30,5,9,5,10,11,27,27,2,0], [4,0,23,13,12,6,13,22,25,12,1,0], [0,0,2,8,8,8,8,8,4,13,12,28,22,2,0], [4,0,31,5,12,7,13,21,28,12,0], [3,0,6,28,13,4,13,20,36,7,0], [3,0,4,29,9,7,13,12,28,20,2,0]]]
      ] },
      { scale: "300 milli-cycles", values: ["196 milli-cycles"], lines: [
        [blue, [[1,0,26,0,0,34,24,35,25,30,29,24,21,0], [0,0,20,20,20,20,20,20,20,0,35,31,26,19,34,35,25,31,26,22,19,0], [1,0,26,0,0,29,23,36,24,30,30,24,21,19,0], [0,0,28,28,28,28,28,28,30,26,30,27,24,21,0], [0,0,26,0,0,36,28,20,37,25,29,30,24,21,0], [0,0,26,0,0,34,25,35,27,28,29,23,21,0], [0,0,26,0,0,35,26,31,36,27,31,28,23,20,0]]]
      ] },
      { scale: "80 %", values: ["20.6 %", "20.0 %"], lines: [
        [green, [[4,0,4,17,6,4,8,13,20,18,0], [8,0,4,10,40,5,9,4,6,7,16,21,11,0], [4,0,18,9,8,4,8,12,20,25,12,0], [0,0,6,10,10,10,10,10,3,7,8,16,22,8,0], [4,0,26,5,9,5,8,13,20,22,0], [3,0,4,21,8,3,8,12,24,20,0], [3,0,3,24,6,4,8,7,16,25,13,0]]],
        [red, [[4,0,3,13,5,4,8,13,21,23,0], [8,0,3,8,27,5,6,3,6,7,17,23,11,0], [4,0,15,8,6,4,8,12,22,29,14,0], [0,0,5,8,8,8,8,8,2,6,8,17,25,9,0], [4,0,22,4,6,5,8,13,20,26,0], [3,0,3,17,7,2,8,12,24,23,0], [3,0,2,18,5,3,7,8,17,26,14,0]]]
      ] },
      { scale: "60 bytes", values: ["17.3 bytes", "7.1 bytes"], lines: [
        [forest, each([4,0,2,3,4,4,6,6,6,5,0])],
        [green, [[1,0,4,0,0,3,5,5,13,9,37,10,7,0], [0,0,4,4,4,4,4,4,4,0,2,3,2,16,5,4,10,12,27,9,9,0], [1,0,4,0,0,3,7,4,12,10,34,9,7,9,0], [0,0,4,4,4,4,4,4,7,11,20,21,7,9,0], [0,0,4,0,0,3,2,18,5,11,10,35,10,7,0], [0,0,4,0,0,3,4,6,11,10,35,12,7,0], [0,0,4,0,0,2,2,9,5,10,18,24,9,10,0]]]
      ] },
      { scale: "30 mega-cycles", values: ["288 mega-cycles", "4 mega-cycles", "231 mega-cycles", "18 mega-cycles", "32 mega-cycles", "4 mega-cycles"], lines: [
        [purple, [[3,0,2,12,9,28,15,56,30,3,0], [6,0,1,4,4,4,1,8,18,18,14,76,9,5,0], [3,0,9,7,10,24,18,55,32,4,0], [0,0,4,8,8,8,8,8,20,25,68,4,4,0], [3,0,11,6,12,23,16,57,30,5,0], [2,0,3,12,6,23,20,35,55,5,0], [3,0,12,6,20,22,38,71,4,5,0]]],
        [forest, [[3,0,1,8,6,22,9,50,27,2,0], [9,0,1,1,5,14,14,11,72,5,2,0], [3,0,6,5,8,18,14,50,28,2,0], [0,0,2,6,6,6,6,6,15,21,63,3,0], [3,0,8,4,9,18,12,52,27,3,0], [3,0,8,4,17,15,32,50,3,0], [3,0,8,3,15,18,33,66,3,0]]],
        [maroon, each([4,0,1,2,2,3,4,3,3,2,0])],
        [red, each([4,0,2,2,2,2,1,2,1,0])],
        [orange, each([0,0,1,0,0,1,1,1,1,1,1,0])]
      ] },
      { scale: "150 bytes", values: ["5.5 bytes", "1.0 bytes", "31.1 bytes"], lines: [
        [forest, [[0,0,45,4,0,1,2,1,1,2,1,1,1,1,0], [0,0,1,1,1,1,1,1,1,1,8,3,1,1,2,2,1,1,1,1,18,0], [0,0,30,4,0,1,2,1,1,2,1,1,1,1,10,0], [0,0,2,2,2,2,2,2,3,2,1,3,1,14,0], [0,0,4,0,0,1,1,1,2,1,1,0], [0,0,4,0,0,1,1,1,3,1,1,0], [0,0,4,0,0,1,1,1,2,1,5,1,16,0]]],
        [green, [[2,2,0,1,5,2,5,4,4,2,4,0], [0,0,2,2,2,2,2,2,2,2,11,5,3,2,3,7,5,4,4,2,24,0], [3,0,4,5,1,5,5,4,4,2,2,19,0], [0,0,4,4,4,4,4,4,7,4,3,5,2,21,0], [0,0,6,0,0,5,4,2,5,5,4,4,1,5,0], [0,0,6,0,0,6,2,4,7,4,4,2,3,0], [0,0,6,0,0,5,4,4,7,4,4,7,19,0]]],
        [red, [[0,0,49,18,0,8,16,14,24,33,21,22,28,27,0], [0,0,8,8,8,8,8,8,8,8,37,13,14,12,17,31,28,20,27,26,43,0], [0,0,42,18,0,13,17,14,24,34,21,22,28,26,18,0], [0,0,15,15,15,15,15,15,36,26,22,28,26,18,0], [0,0,21,0,0,16,13,16,26,34,21,22,28,26,0], [0,0,21,0,8,17,13,17,37,21,22,28,26,0], [0,0,20,0,0,16,13,17,33,25,20,28,26,18,0]]]
      ] },
      { scale: "15 bytes", values: ["1.75 bytes"], lines: [
        [red, [[4,0,16,6,0,0,0,0,2,4,0], [8,0,39,11,6,7,0,0,0,0,3,2,5,0], [4,0,11,6,0,0,0,10,2,4,3,0], [0,0,5,8,8,8,8,8,0,0,2,4,5,0], [3,0,38,10,6,0,0,0,11,2,4,0], [3,0,16,6,0,0,0,0,2,4,0], [3,0,38,7,4,0,0,2,3,4,0]]]
      ] },
      { scale: "500 mebi-bytes", values: ["0.01 gibi-bytes", "1.20 gibi-bytes", "3.81 gibi-bytes"], lines: [
        [blue, [[9,0,50,0], [16,0,52,0], [9,0,52,0], [9,0,50,0], [9,0,50,0], [9,0,39,25,0], [9,0,50,0]]]
      ] }
    ]
  }
};

function points(bursts, frames, height) {
  var base = height - 1.5;
  var list = ["0," + base];
  bursts.forEach(function(burst, frame) {
    var first = frames[frame] + burst[0];
    burst.slice(1).forEach(function(value, i) {
      list.push((ORIGIN + (first + i) * STEP).toFixed(1) + "," + (base - value));
    });
  });
  list.push(CHART_WIDTH + "," + base);
  return list.join(" ");
}

function drawChart(lines, frames, height) {
  var svg = '<svg viewBox="0 0 ' + CHART_WIDTH + ' ' + height + '" preserveAspectRatio="none" aria-hidden="true">';
  for (var x = 18.5; x < CHART_WIDTH; x += 35.52) {
    svg += '<path class="grid" d="M' + x.toFixed(1) + ' 0v' + height + '"/>';
  }
  svg += '<path class="rule" d="M0 ' + (height - 0.5) + 'h' + CHART_WIDTH + '"/>';
  lines.forEach(function(line) {
    svg += '<polyline stroke="' + line[0] + '" points="' + points(line[1], frames, height) + '"/>';
  });
  svg += '<rect class="selection" x="161" width="710" height="' + height + '"/>';
  svg += '<path class="edge" d="M161.5 0v' + height + 'M870.5 0v' + height + '"/>';
  return svg + '</svg>';
}

function dot(color) {
  return '<i class="dot" style="background-color: ' + color + '"></i>';
}

function drawRow(row, chart, frames) {
  var legend = row.items.map(function(item) {
    return '<li>' + dot(item[1]) + item[0] + '</li>';
  }).join("");
  var values = chart.values.map(function(value, i) {
    return '<li>' + dot(row.items[i][1]) + '<span>' + value + '</span></li>';
  }).join("");

  return '<article class="row" style="height: ' + row.height + 'px">' +
    '<div class="legend"><header><h2>' + row.title + '</h2>' +
    '<button class="gear" aria-label="Configure ' + row.title + '"><svg><use href="#i-gear"/></svg></button></header>' +
    '<ul>' + legend + '</ul></div>' +
    '<div class="side"><i class="swatch"></i></div>' +
    '<div class="chart">' + drawChart(chart.lines, frames, row.height) +
    '<span class="scale">' + chart.scale + '</span>' +
    '<ul class="values" style="left: ' + (875 / CHART_WIDTH * 100).toFixed(2) + '%">' + values + '</ul></div>' +
    '</article>';
}

document.querySelectorAll(".panel").forEach(function(panel) {
  var data = panels[panel.dataset.panel];

  var marks = "";
  for (var i = 0; i < 36; i++) {
    marks += '<span class="mark">1m' + Number((data.firstMark + i * 0.05).toFixed(2)) + 's</span>';
  }
  panel.querySelector(".ruler").innerHTML = marks;

  var html = "";
  if (data.partial) {
    html += '<article class="row" style="height: 7px"><div class="legend"></div><div class="side"></div>' +
      '<div class="chart">' + drawChart(data.partial, data.frames, 7) + '</div></article>';
  }
  rows.forEach(function(row, i) {
    html += drawRow(row, data.charts[i], data.frames);
  });
  panel.querySelector(".rows").innerHTML = html;
});
```
